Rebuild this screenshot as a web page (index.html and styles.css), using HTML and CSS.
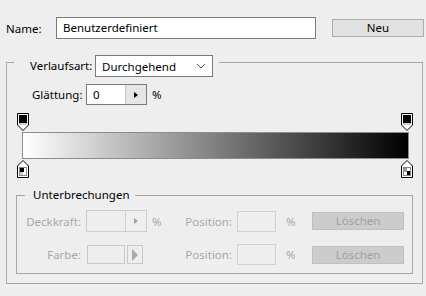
FILE: index.html
```html
<!DOCTYPE html>
<html lang="de">
<head>
    <meta charset="UTF-8">
    <title>Verlaufsumsetzung</title>
    <link rel="stylesheet" href="styles.css">
</head>
<body>
    <div class="name-row">
        <span class="name-label">Name:</span>
        <div class="text-input name-input">Benutzerdefiniert</div>
        <div class="btn btn-neu">Neu</div>
    </div>

    <div class="group outer">
        <div class="group-head">
            <div class="line line-start"></div>
            <span class="head-label">Verlaufsart:</span>
            <div class="select">
                <span>Durchgehend</span>
                <svg width="10" height="6" viewBox="0 0 10 6"><path d="M1 1 L5 5 L9 1" fill="none" stroke="#555" stroke-width="1"/></svg>
            </div>
            <div class="line line-end"></div>
        </div>
        <div class="group-body outer-body">
            <div class="smooth-row">
                <span class="smooth-label">Glättung:</span>
                <div class="spin-input">
                    <span class="spin-value">0</span>
                    <span class="spin-btn">
                        <svg width="4" height="6" viewBox="0 0 4 6"><path d="M0 0 L4 3 L0 6 Z" fill="#000"/></svg>
                    </span>
                </div>
                <span class="unit">%</span>
            </div>

            <div class="stops stops-top">
                <svg class="stop" width="12" height="18" viewBox="0 0 12 18">
                    <path d="M0.5 0.5 H11.5 V12 L6 17.5 L0.5 12 Z" fill="#fff" stroke="#000"/>
                    <rect x="2" y="2" width="8" height="8" fill="#000"/>
                    <path d="M2 11 H10" stroke="#999"/>
                </svg>
                <svg class="stop" width="12" height="18" viewBox="0 0 12 18">
                    <path d="M0.5 0.5 H11.5 V12 L6 17.5 L0.5 12 Z" fill="#fff" stroke="#000"/>
                    <rect x="2" y="2" width="8" height="8" fill="#000"/>
                    <path d="M2 11 H10" stroke="#999"/>
                </svg>
            </div>
            <div class="gradient-bar"></div>
            <div class="stops stops-bottom">
                <svg class="stop" width="12" height="18" viewBox="0 0 12 18">
                    <path d="M6 0.5 L11.5 6 V17.5 H0.5 V6 Z" fill="#fff" stroke="#000"/>
                    <rect x="2.5" y="7.5" width="7" height="8" fill="#fff" stroke="#888"/>
                    <rect x="3" y="8" width="4" height="4" fill="#000"/>
                    <rect x="3" y="12" width="3" height="3" fill="#ccc"/>
                </svg>
                <svg class="stop" width="12" height="18" viewBox="0 0 12 18">
                    <path d="M6 0.5 L11.5 6 V17.5 H0.5 V6 Z" fill="#fff" stroke="#000"/>
                    <rect x="2.5" y="7.5" width="7" height="8" fill="#fff" stroke="#888"/>
                    <rect x="3" y="8" width="3" height="4" fill="#999"/>
                    <rect x="6" y="11" width="3" height="4" fill="#000"/>
                </svg>
            </div>

            <div class="group inner">
                <div class="group-head inner-head">
                    <div class="line line-start inner-start"></div>
                    <span class="head-label inner-label">Unterbrechungen</span>
                    <div class="line line-end"></div>
                </div>
                <div class="group-body inner-body">
                    <div class="stop-row">
                        <span class="dis-label">Deckkraft:</span>
                        <div class="field">
                            <div class="spin-input disabled">
                                <span class="spin-value"></span>
                                <span class="spin-btn">
                                    <svg width="4" height="6" viewBox="0 0 4 6"><path d="M0 0 L4 3 L0 6 Z" fill="#a0a0a0"/></svg>
                                </span>
                            </div>
                            <span class="unit dis">%</span>
                        </div>
                        <span class="dis-label">Position:</span>
                        <div class="pos-input"></div>
                        <span class="unit dis">%</span>
                        <div class="btn btn-del">Löschen</div>
                    </div>
                    <div class="stop-row second">
                        <span class="dis-label">Farbe:</span>
                        <div class="field">
                            <div class="color-box"></div>
                            <div class="color-arrow">
                                <svg width="6" height="12" viewBox="0 0 6 12"><path d="M0 0 L6 6 L0 12 Z" fill="#a8a8a8"/></svg>
                            </div>
                        </div>
                        <span class="dis-label">Position:</span>
                        <div class="pos-input"></div>
                        <span class="unit dis">%</span>
                        <div class="btn btn-del">Löschen</div>
                    </div>
                </div>
            </div>
        </div>
    </div>
</body>
</html>
```

FILE: styles.css
```css
body {
    margin: 0;
    padding: 17px 0 0 6px;
    background-color: #eeeeee;
    font-family: 'Noto Sans', 'Open Sans', sans-serif;
    font-size: 11.5px;
    color: #000;
    width: 426px;
    height: 296px;
    box-sizing: border-box;
    overflow: hidden;
}

.name-row {
    display: flex;
    align-items: center;
    height: 22px;
}

.name-label {
    width: 50px;
}

.text-input {
    box-sizing: border-box;
    height: 22px;
    background-color: #fff;
    border: 1px solid #7a7a7a;
    padding: 0 0 0 6px;
    line-height: 20px;
}

.name-input {
    width: 260px;
}

.btn {
    box-sizing: border-box;
    height: 18px;
    width: 92px;
    line-height: 16px;
    text-align: center;
}

.btn-neu {
    margin-left: 16px;
    background-color: #e1e1e1;
    border: 1px solid #adadad;
}

/* group boxes */
.group {
    display: flex;
    flex-direction: column;
}

.outer {
    width: 417px;
    margin-top: 16px;
}

.group-head {
    display: flex;
    align-items: flex-start;
    height: 22px;
}

.line {
    border-top: 1px solid #a6a6a6;
    margin-top: 7px;
    height: 15px;
}

.line-start {
    width: 7px;
    border-left: 1px solid #a6a6a6;
}

.line-end {
    flex: 1;
    border-right: 1px solid #a6a6a6;
}

.head-label {
    margin-left: 16px;
    line-height: 22px;
    width: 65px;
}

.select {
    box-sizing: border-box;
    width: 118px;
    height: 22px;
    margin-right: 6px;
    background-color: #fff;
    border: 1px solid #7a7a7a;
    display: flex;
    align-items: center;
    justify-content: space-between;
    padding: 0 6px 0 6px;
}

.group-body {
    border: 1px solid #a6a6a6;
    border-top: none;
}

.outer-body {
    height: 207px;
    padding: 7px 0 0 0;
    box-sizing: border-box;
}

.smooth-row {
    display: flex;
    align-items: center;
    height: 21px;
}

.smooth-label {
    margin-left: 25px;
    width: 54px;
}

.spin-input {
    box-sizing: border-box;
    width: 61px;
    height: 21px;
    display: flex;
    background-color: #fff;
    border: 1px solid #7a7a7a;
}

.spin-value {
    flex: 1;
    padding-left: 6px;
    line-height: 19px;
}

.spin-btn {
    width: 20px;
    background-color: #e6e6e6;
    border-left: 1px solid #c4c4c4;
    display: flex;
    align-items: center;
    justify-content: center;
}

.unit {
    margin-left: 5px;
}

/* gradient */
.stops {
    display: flex;
    justify-content: space-between;
    width: 396px;
    margin-left: 10px;
}

.stops-top {
    margin-top: 8px;
    height: 18px;
}

.gradient-bar {
    box-sizing: border-box;
    width: 387px;
    height: 27px;
    margin: 1px 0 0 15px;
    border: 1px solid #8c8c8c;
    background: linear-gradient(to right, #ffffff, #000000);
}

.stops-bottom {
    margin-top: 1px;
    height: 18px;
}

.inner {
    width: 397px;
    margin: 10px 0 0 9px;
}

.inner-head {
    height: 14px;
}

.inner-head .line {
    height: 7px;
}

.inner-start {
    width: 8px;
}

.inner-label {
    margin-left: 8px;
    width: auto;
    line-height: 14px;
    margin-right: 6px;
}

.inner-body {
    height: 72px;
    box-sizing: border-box;
    padding-top: 8px;
}

/* label | field | label | input | % | button */
.stop-row {
    display: grid;
    grid-template-columns: 69px 95px 56px 44px 31px 92px;
    align-items: center;
    height: 22px;
}

.stop-row.second {
    margin-top: 12px;
    height: 21px;
}

.dis-label {
    text-align: right;
    color: #a8a8a8;
    padding-right: 5px;
}

.field {
    display: flex;
    align-items: center;
}

.disabled {
    height: 22px;
    background-color: #eeeeee;
    border-color: #cccccc;
}

.disabled .spin-btn {
    background-color: #eeeeee;
    border-left-color: #d0d0d0;
}

.unit.dis {
    color: #a8a8a8;
}

.pos-input {
    box-sizing: border-box;
    width: 39px;
    height: 21px;
    border: 1px solid #d2d2d2;
    background-color: #eeeeee;
}

.btn-del {
    background-color: #cccccc;
    border: 1px solid #c0c0c0;
    color: #a0a0a0;
}

.color-box {
    box-sizing: border-box;
    width: 38px;
    height: 19px;
    margin-left: 1px;
    border: 1px solid #c8c8c8;
    background-color: #eeeeee;
}

.color-arrow {
    box-sizing: border-box;
    width: 16px;
    height: 19px;
    margin-left: 2px;
    border: 1px solid #c8c8c8;
    display: flex;
    align-items: center;
    justify-content: center;
}
```
